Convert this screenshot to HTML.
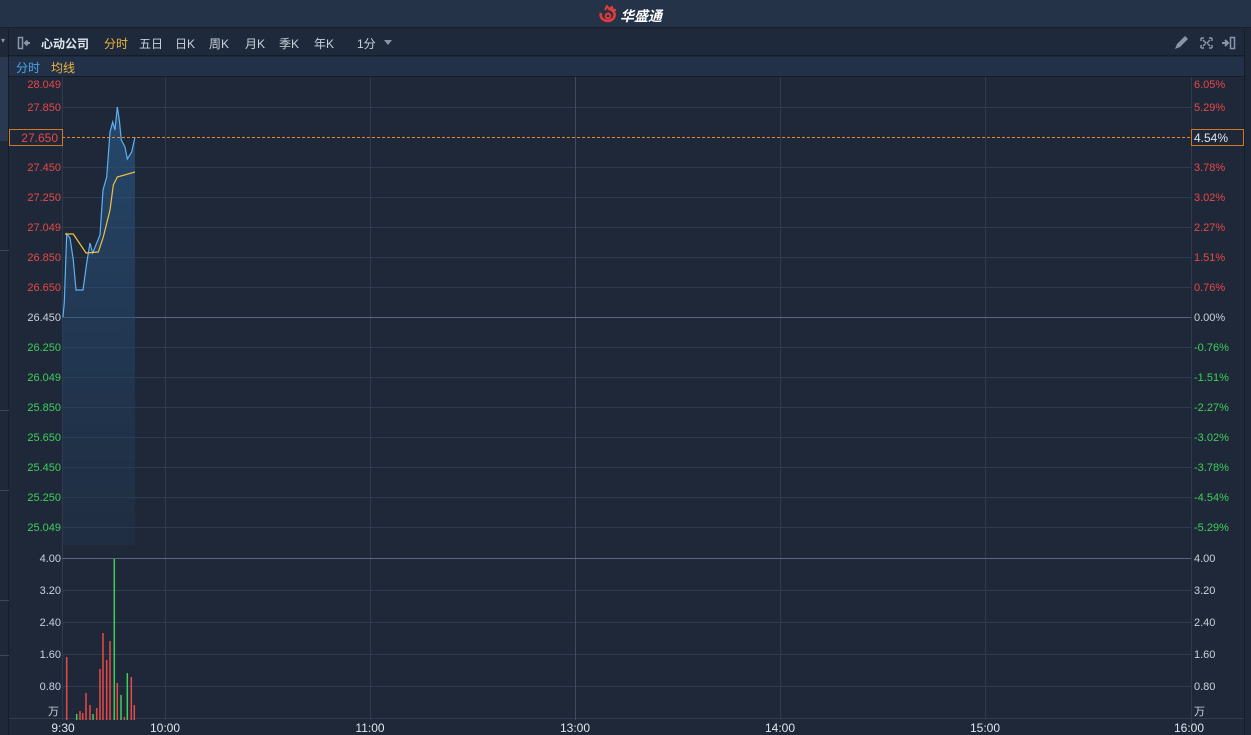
<!DOCTYPE html>
<html><head><meta charset="utf-8"><style>
*{margin:0;padding:0;box-sizing:border-box}
body{width:1251px;height:735px;overflow:hidden;background:#1e2838;font-family:"Liberation Sans","Noto Sans CJK SC",sans-serif;position:relative}
.top{position:absolute;left:0;top:0;width:1251px;height:28px;background:#243348;border-bottom:1px solid #18202c}
.tb{position:absolute;left:9px;top:29px;width:1235px;height:27px;background:#1e2a3b;border-bottom:1px solid #151d28}
.sub{position:absolute;left:9px;top:57px;width:1235px;height:20px;background:#223148;border-bottom:1px solid #151d28}
.t{position:absolute;font-size:12px;white-space:nowrap}
.lstrip{position:absolute;left:0;top:29px;width:9px;height:706px;background:#1e2838;border-right:1px solid #151d28}
.rstrip{position:absolute;left:1244px;top:29px;width:7px;height:706px;background:#1e2838;border-left:1px solid #151d28}
</style></head><body>
<div class="top"></div>
<div class="lstrip"><div style="position:absolute;left:0;top:28px;width:8px;height:84px;background:#2a3950"></div></div>
<div class="rstrip"></div>
<div class="tb"></div>
<div class="sub"></div>
<svg style="position:absolute;left:597px;top:5px" width="22" height="18" viewBox="0 0 22 18"><path d="M4 8a7 6 0 1 0 8-4" fill="none" stroke="#e53a3a" stroke-width="2.6"/><path d="M8 5l2-4 2 3 3-2 1 3 3 0" fill="none" stroke="#e53a3a" stroke-width="2"/><circle cx="11" cy="11" r="2.4" fill="none" stroke="#e53a3a" stroke-width="2"/></svg>
<div class="t" style="left:620px;top:6px;color:#fff;font-weight:bold;font-size:14px;font-style:italic">华盛通</div>
<svg style="position:absolute;left:17px;top:36px" width="18" height="14"><rect x="1.5" y="1.5" width="4" height="11" fill="none" stroke="#8a96a8" stroke-width="1.5"/><path d="M8 7h5M10.5 4.5L8 7l2.5 2.5" stroke="#8a96a8" stroke-width="2" fill="none"/></svg>
<div class="t" style="left:1px;top:36px;color:#8a96a8;font-size:8px">▾</div>
<div class="t" style="left:41px;top:35px;color:#dfe5ee;font-weight:bold">心动公司</div>
<div class="t" style="left:104px;top:35px;color:#f0b43c">分时</div>
<div class="t" style="left:139px;top:35px;color:#c9d1dc">五日</div>
<div class="t" style="left:175px;top:35px;color:#c9d1dc">日K</div>
<div class="t" style="left:209px;top:35px;color:#c9d1dc">周K</div>
<div class="t" style="left:245px;top:35px;color:#c9d1dc">月K</div>
<div class="t" style="left:279px;top:35px;color:#c9d1dc">季K</div>
<div class="t" style="left:314px;top:35px;color:#c9d1dc">年K</div>
<div class="t" style="left:357px;top:35px;color:#c9d1dc">1分</div>
<svg style="position:absolute;left:384px;top:40px" width="9" height="6"><path d="M0 0h8l-4 5z" fill="#8a96a8"/></svg>
<svg style="position:absolute;left:1172px;top:34px" width="80" height="18"><path d="M3 15l2-5 8-8 3 3-8 8z" fill="#8a96a8"/><path d="M29 4h3M29 4v3M40 4h-3M40 4v3M29 14h3M29 14v-3M40 14h-3M40 14v-3M31 6l3 3M38 6l-3 3M31 12l3-3M38 12l-3-3" stroke="#8a96a8" stroke-width="1.5"/><path d="M50 9h5M53 6l3 3-3 3" stroke="#8a96a8" stroke-width="2" fill="none"/><rect x="58.5" y="3.5" width="4" height="11" fill="none" stroke="#8a96a8" stroke-width="1.5"/></svg>
<div class="t" style="left:16px;top:59px;color:#4aa3e8">分时</div>
<div class="t" style="left:51px;top:59px;color:#f0b43c">均线</div>

<svg style="position:absolute;left:0;top:0" width="1251" height="735">
<g stroke="#2e3b50" stroke-width="1">
<line x1="165.5" y1="77" x2="165.5" y2="720"/><line x1="370.5" y1="77" x2="370.5" y2="720"/><line x1="780.5" y1="77" x2="780.5" y2="720"/><line x1="985.5" y1="77" x2="985.5" y2="720"/>
<line x1="62.5" y1="77" x2="62.5" y2="720"/><line x1="1191.5" y1="77" x2="1191.5" y2="735"/>
<line x1="62" y1="107.5" x2="1191" y2="107.5"/><line x1="62" y1="167.5" x2="1191" y2="167.5"/><line x1="62" y1="197.5" x2="1191" y2="197.5"/><line x1="62" y1="227.5" x2="1191" y2="227.5"/><line x1="62" y1="257.5" x2="1191" y2="257.5"/><line x1="62" y1="287.5" x2="1191" y2="287.5"/><line x1="62" y1="347.5" x2="1191" y2="347.5"/><line x1="62" y1="377.5" x2="1191" y2="377.5"/><line x1="62" y1="407.5" x2="1191" y2="407.5"/><line x1="62" y1="437.5" x2="1191" y2="437.5"/><line x1="62" y1="467.5" x2="1191" y2="467.5"/><line x1="62" y1="497.5" x2="1191" y2="497.5"/><line x1="62" y1="527.5" x2="1191" y2="527.5"/>
<line x1="62" y1="590.5" x2="1191" y2="590.5"/><line x1="62" y1="622.5" x2="1191" y2="622.5"/><line x1="62" y1="654.5" x2="1191" y2="654.5"/><line x1="62" y1="686.5" x2="1191" y2="686.5"/>
<line x1="9" y1="718.5" x2="1244" y2="718.5"/>
</g>
<line x1="575.5" y1="77" x2="575.5" y2="720" stroke="#3f4d63"/>
<line x1="62" y1="317.5" x2="1191" y2="317.5" stroke="#5a6880"/>
<line x1="62" y1="558.5" x2="1191" y2="558.5" stroke="#5a6880"/>
<line x1="0" y1="250.5" x2="9" y2="250.5" stroke="#3a475c"/><line x1="0" y1="410.5" x2="9" y2="410.5" stroke="#3a475c"/><line x1="0" y1="490.5" x2="9" y2="490.5" stroke="#3a475c"/><line x1="0" y1="600.5" x2="9" y2="600.5" stroke="#3a475c"/><line x1="0" y1="655.5" x2="9" y2="655.5" stroke="#3a475c"/>
<defs><linearGradient id="g" x1="0" y1="0" x2="0" y2="1"><stop offset="0" stop-color="#2a5a8a" stop-opacity=".65"/><stop offset="1" stop-color="#223a58" stop-opacity=".3"/></linearGradient></defs>
<path d="M63 317L64.3 302L66.7 234L70 238L73.3 260L76 290L83 290L86.7 263L90 243L92.7 253L96.7 243L100 235L103 190L106.7 177L110 132L112.7 122L115 130L117.3 107L119.3 120L121.3 140L125 147L127.3 159L131.7 152L135 137L135 545L63 545Z" fill="url(#g)"/>
<path d="M63 317L64.3 302L66.7 234L70 238L73.3 260L76 290L83 290L86.7 263L90 243L92.7 253L96.7 243L100 235L103 190L106.7 177L110 132L112.7 122L115 130L117.3 107L119.3 120L121.3 140L125 147L127.3 159L131.7 152L135 137" fill="none" stroke="#5fb0f0" stroke-width="1.2"/>
<path d="M65 234L73.3 234L79.3 243L86 253L98.3 252L103.3 237L110 210L113.3 185L117.3 177L135 172" fill="none" stroke="#f0c040" stroke-width="1.2"/>
<line x1="62" y1="137.5" x2="1191" y2="137.5" stroke="#e08a2a" stroke-dasharray="3,2"/>
<rect x="9.5" y="129.5" width="53" height="16" fill="#1e2838" stroke="#d07a28"/>
<rect x="1191.5" y="129.5" width="52" height="16" fill="#1e2838" stroke="#d07a28"/>
<g stroke-width="1.5">
<line x1="66.7" y1="657" x2="66.7" y2="720" stroke="#e84848"/>
<line x1="76.7" y1="714" x2="76.7" y2="720" stroke="#3ecf5a"/>
<line x1="80" y1="711" x2="80" y2="720" stroke="#e84848"/>
<line x1="82.7" y1="713" x2="82.7" y2="720" stroke="#e84848"/>
<line x1="86" y1="693" x2="86" y2="720" stroke="#e84848"/>
<line x1="90" y1="705" x2="90" y2="720" stroke="#e84848"/>
<line x1="93" y1="714" x2="93" y2="720" stroke="#3ecf5a"/>
<line x1="96.7" y1="708" x2="96.7" y2="720" stroke="#e84848"/>
<line x1="100" y1="669" x2="100" y2="720" stroke="#e84848"/>
<line x1="103" y1="633" x2="103" y2="720" stroke="#e84848"/>
<line x1="106.7" y1="660" x2="106.7" y2="720" stroke="#e84848"/>
<line x1="110" y1="641" x2="110" y2="720" stroke="#e84848"/>
<line x1="114.3" y1="559" x2="114.3" y2="720" stroke="#3ecf5a"/>
<line x1="117.3" y1="683" x2="117.3" y2="720" stroke="#e84848"/>
<line x1="121" y1="695" x2="121" y2="720" stroke="#3ecf5a"/>
<line x1="124.3" y1="717" x2="124.3" y2="720" stroke="#e84848"/>
<line x1="127.3" y1="673" x2="127.3" y2="720" stroke="#3ecf5a"/>
<line x1="131.3" y1="677" x2="131.3" y2="720" stroke="#e84848"/>
<line x1="134.3" y1="705" x2="134.3" y2="720" stroke="#e84848"/>
</g>
<g font-family="Liberation Sans, sans-serif" font-size="11">
<g text-anchor="end" fill="#e84848">
<text x="61" y="88">28.049</text><text x="61" y="111">27.850</text><text x="58" y="142" font-size="12">27.650</text><text x="61" y="171">27.450</text><text x="61" y="201">27.250</text><text x="61" y="231">27.049</text><text x="61" y="261">26.850</text><text x="61" y="291">26.650</text>
</g>
<text x="61" y="321" text-anchor="end" fill="#c9d1dc">26.450</text>
<g text-anchor="end" fill="#3ecf5a">
<text x="61" y="351">26.250</text><text x="61" y="381">26.049</text><text x="61" y="411">25.850</text><text x="61" y="441">25.650</text><text x="61" y="471">25.450</text><text x="61" y="501">25.250</text><text x="61" y="531">25.049</text>
</g>
<g fill="#e84848">
<text x="1194" y="88">6.05%</text><text x="1194" y="111">5.29%</text><text x="1194" y="171">3.78%</text><text x="1194" y="201">3.02%</text><text x="1194" y="231">2.27%</text><text x="1194" y="261">1.51%</text><text x="1194" y="291">0.76%</text>
</g>
<text x="1194" y="142" fill="#dfe5ee" font-size="12">4.54%</text>
<text x="1194" y="321" fill="#c9d1dc">0.00%</text>
<g fill="#3ecf5a">
<text x="1194" y="351">-0.76%</text><text x="1194" y="381">-1.51%</text><text x="1194" y="411">-2.27%</text><text x="1194" y="441">-3.02%</text><text x="1194" y="471">-3.78%</text><text x="1194" y="501">-4.54%</text><text x="1194" y="531">-5.29%</text>
</g>
<g fill="#c9d1dc">
<text x="61" y="562" text-anchor="end">4.00</text><text x="61" y="594" text-anchor="end">3.20</text><text x="61" y="626" text-anchor="end">2.40</text><text x="61" y="658" text-anchor="end">1.60</text><text x="61" y="690" text-anchor="end">0.80</text><text x="59" y="715" text-anchor="end">万</text>
<text x="1194" y="562">4.00</text><text x="1194" y="594">3.20</text><text x="1194" y="626">2.40</text><text x="1194" y="658">1.60</text><text x="1194" y="690">0.80</text><text x="1194" y="715">万</text>
</g>
<g fill="#dfe5ee" font-size="12" text-anchor="middle">
<text x="63" y="732">9:30</text><text x="165" y="732">10:00</text><text x="370" y="732">11:00</text><text x="575" y="732">13:00</text><text x="780" y="732">14:00</text><text x="985" y="732">15:00</text><text x="1189" y="732">16:00</text>
</g>
</g>
</svg>
</body></html>
